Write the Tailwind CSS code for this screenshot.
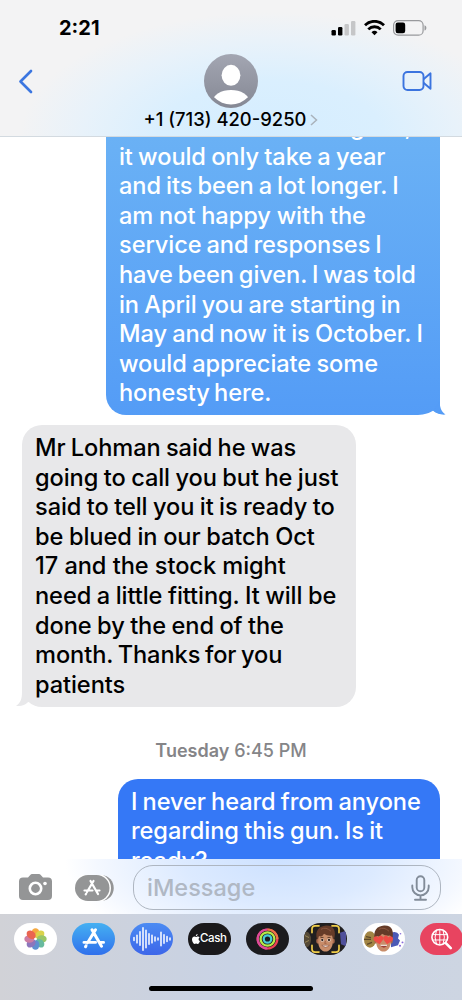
<!DOCTYPE html>
<html lang="en">
<head>
<meta charset="utf-8">
<title>Messages</title>
<script src="https://cdn.jsdelivr.net/npm/@tailwindcss/browser@4"></script>
</head>
<body class="bg-white">
<div class="flex h-[1000px] w-[462px] flex-col overflow-hidden bg-white font-['Inter','Liberation_Sans',sans-serif] text-black">

  <header class="h-[137px] shrink-0 border-b border-[#d3dae0] bg-[#f3f3f4] bg-[radial-gradient(ellipse_250px_125px_at_270px_137px,#d4edff_0%,#daeffe_45%,#e8f2fa_75%,#f3f3f400_100%)]">
    <div class="flex h-[54px] items-center justify-between pt-[2px] pr-[35px] pl-[59px]">
      <span class="text-[20px] font-bold">2:21</span>
      <div class="flex items-center gap-[8px]">
        <svg width="25" height="16" viewBox="0 0 25 16"><rect x="0.5" y="10" width="4.4" height="5.5" rx="1.2"/><rect x="7" y="7" width="4.4" height="8.500" rx="1.200"/><rect x="13.500" y="4" width="4.400" height="11.500" rx="1.200" fill="#c5c6c8"/><rect x="20" y="1" width="4.400" height="14.500" rx="1.200" fill="#c5c6c8"/></svg>
        <svg width="21" height="16" viewBox="0 0 21 16" fill="none" stroke="#000" stroke-width="2.800"><path d="M1 5.200a13.500 13.500 0 0 1 19 0"/><path d="M4.300 9.400a8.600 8.600 0 0 1 12.400 0"/><path d="M10.500 15.200l-3-3a4.300 4.300 0 0 1 6 0z" fill="#000" stroke="none"/></svg>
        <svg width="34" height="16" viewBox="0 0 34 16"><rect x=".6" y=".6" width="29.500" height="14.600" rx="4.500" fill="none" stroke="#98999c" stroke-width="1.200"/><rect x="2.600" y="2.600" width="9.600" height="10.600" rx="2.200"/><path d="M31.500 5.200c2.500.8 2.500 4.600 0 5.400z" fill="#98999c"/></svg>
      </div>
    </div>
    <div class="flex h-[54px] items-center justify-between pr-[29px] pl-[18px]">
      <svg width="16" height="25" viewBox="0 0 16 25" fill="none" stroke="#3b76e0" stroke-width="2.700" stroke-linecap="round" stroke-linejoin="round"><path d="M13 2L2.500 12.500 13 23"/></svg>
      <svg class="ml-[26px]" width="54" height="54" viewBox="0 0 54 54"><defs><linearGradient id="av" x2="0" y2="1"><stop stop-color="#a3a6b2"/><stop offset="1" stop-color="#858894"/></linearGradient><clipPath id="avc"><circle cx="27" cy="27" r="23.500"/></clipPath></defs><circle cx="27" cy="27" r="27" fill="url(#av)"/><ellipse cx="27" cy="21.300" rx="9.400" ry="10.500" fill="#fff"/><ellipse cx="27" cy="47" rx="18" ry="11" fill="#fff" clip-path="url(#avc)"/></svg>
      <svg width="31" height="22" viewBox="0 0 31 22" fill="none" stroke="#3b74df" stroke-width="1.900" stroke-linejoin="round"><rect x="1.500" y="2" width="20" height="18" rx="4"/><path d="M21.500 9.300l7-6v15.400l-7-6"/></svg>
    </div>
    <div class="flex h-[24px] items-center pl-[143.500px]">
      <span class="text-[18.400px] font-medium whitespace-nowrap">+1 (713) 420-9250</span>
      <svg class="ml-[4px]" width="8" height="12" viewBox="0 0 8 12" fill="none" stroke="#a9b2bb" stroke-width="1.500"><path d="M1 1l5.500 5L1 11"/></svg>
    </div>
  </header>

  <main class="flex h-[722px] shrink-0 flex-col overflow-hidden text-[23.600px] leading-[29.600px] font-[540] tracking-[-0.080px] whitespace-nowrap">
    <div class="relative mr-[22px] h-[278px] w-[334px] shrink-0 self-end rounded-bl-[20px] bg-linear-to-b from-[#6ab1f5] to-[#549cf6] text-white">
      <div class="h-full overflow-hidden rounded-bl-[20px] pl-[13px]">
        <p class="-mt-[25px] flex pl-[231px]"><span>g</span><span class="ml-[40px]">,</span></p>
        <p class="[word-spacing:-0.900px]">it would only take a year</p>
        <p class="[word-spacing:-1.100px]">and its been a lot longer. I</p>
        <p class="[word-spacing:-0.300px]">am not happy with the</p>
        <p class="[word-spacing:-1.200px]">service and responses I</p>
        <p class="[word-spacing:-1.300px]">have been given. I was told</p>
        <p class="[word-spacing:-0.900px]">in April you are starting in</p>
        <p class="[word-spacing:-0.900px]">May and now it is October. I</p>
        <p class="[word-spacing:-0.800px]">would appreciate some</p>
        <p class="[word-spacing:-1.900px]">honesty here.</p>
      </div>
      <svg class="absolute -right-[6px] -bottom-px" width="32" height="21" viewBox="0 0 32 21"><path d="M4 20C11 19.600 15.500 18 19 15.800 22 18 26 19.500 32 19.500V21H4z" fill="#fff"/><path d="M25.500 6c.3 6 1.500 10.500 6 13.600-5 .4-9-1-12-3.800z" fill="#549cf6"/></svg>
    </div>

    <div class="relative mt-[10px] ml-[22px] h-[282px] w-[334px] shrink-0 rounded-[20px] bg-[#e8e8ea] pt-[8px] pl-[13px]">
      <p class="[word-spacing:-0.900px]">Mr Lohman said he was</p>
      <p class="[word-spacing:-0.700px]">going to call you but he just</p>
      <p class="[word-spacing:-0.700px]">said to tell you it is ready to</p>
      <p class="[word-spacing:-0.500px]">be blued in our batch Oct</p>
      <p class="[word-spacing:0.100px]">17 and the stock might</p>
      <p class="[word-spacing:-0.600px]">need a little fitting. It will be</p>
      <p class="[word-spacing:-0.700px]">done by the end of the</p>
      <p class="[word-spacing:-1.600px]">month. Thanks for you</p>
      <p>patients</p>
      <svg class="absolute bottom-0 -left-[6px]" width="26" height="22" viewBox="0 0 26 22"><path d="M6 0v7c0 7-1.500 11-6 13.800 5 .8 9-.6 11.500-3.200L20 14z" fill="#e8e8ea"/></svg>
    </div>

    <p class="mt-[29px] text-center text-[18px] font-medium tracking-normal text-[#858588]"><span class="font-semibold">Tuesday</span> 6:45 PM</p>

    <div class="mt-[13px] mr-[22px] h-[120px] w-[322px] shrink-0 self-end rounded-t-[20px] bg-[#3578f6] pt-[8px] pl-[13px] text-white">
      <p class="[word-spacing:-1px]">I never heard from anyone</p>
      <p class="[word-spacing:-0.900px]">regarding this gun. Is it</p>
      <p>ready?</p>
    </div>
  </main>

  <section class="flex h-[55px] shrink-0 items-center bg-white bg-[radial-gradient(ellipse_215px_100px_at_280px_0px,#cde1ff_0%,#dceaff_45%,#f4f8ff_85%,#ffffff00_100%)] pt-[2px] pl-[19px]">
    <svg width="33" height="27" viewBox="0 0 33 27"><path d="M4 3.500h5L11.500.8Q12 0 13 0h7q1 0 1.500.8L24 3.500h5q4 0 4 4V22q0 4-4 4H4q-4 0-4-4V7.500q0-4 4-4z" fill="#949596"/><circle cx="16.500" cy="14.500" r="5.700" fill="none" stroke="#fff" stroke-width="2.600"/><circle cx="26" cy="9.500" r="1.800" fill="#fff"/></svg>
    <svg class="ml-[23px]" width="40" height="26" viewBox="0 0 40 26"><path d="M26 0c17 1 17 25 0 26z" fill="#949596"/><rect x="-1" y="-1.500" width="37" height="29" rx="14.500" fill="#fff"/><rect width="34.500" height="26" rx="13" fill="#949596"/><g stroke="#fff" stroke-width="2.200" stroke-linecap="round"><path d="M15.500 6l7.500 13M18.500 6L12 17M9.500 15.500h8M21.500 15.500h3M11.200 18.700l-.5.700"/></g></svg>
    <div class="ml-[18px] flex h-[45px] w-[308px] items-center justify-between rounded-[20px] border border-[#aeb6c1] pr-[10px] pl-[13px]">
      <span class="text-[23.500px] font-medium text-[#b0b8c4]">iMessage</span>
      <svg width="19" height="26" viewBox="0 0 19 26" fill="none" stroke="#828c99" stroke-width="1.900" stroke-linecap="round"><rect x="5.700" y="1.200" width="7.600" height="15" rx="3.800"/><path d="M1.300 10.500v1.700a8.200 8.200 0 0 0 16.400 0v-1.700M9.500 20.500v4M4 24.700h11"/></svg>
    </div>
  </section>

  <footer class="h-[86px] shrink-0 bg-linear-to-r from-[#d1d2d7] via-[#c8d2e4] to-[#cdd5e2]">
    <div class="flex gap-[15px] pt-[9px] pl-[14px]">
      <svg class="shrink-0" width="43" height="32" viewBox="0 0 43 33" preserveAspectRatio="none"><rect width="43" height="33" rx="16.500" fill="#fff"/><g opacity=".9"><ellipse cx="21.500" cy="10.300" rx="3.900" ry="5" fill="#f5a02c"/><ellipse cx="21.500" cy="10.300" rx="3.900" ry="5" fill="#d6cf38" transform="rotate(45 21.500 16.500)"/><ellipse cx="21.500" cy="10.300" rx="3.900" ry="5" fill="#8ec057" transform="rotate(90 21.500 16.500)"/><ellipse cx="21.500" cy="10.300" rx="3.900" ry="5" fill="#58b395" transform="rotate(135 21.500 16.500)"/><ellipse cx="21.500" cy="10.300" rx="3.900" ry="5" fill="#4d84cb" transform="rotate(180 21.500 16.500)"/><ellipse cx="21.500" cy="10.300" rx="3.900" ry="5" fill="#8068b5" transform="rotate(225 21.500 16.500)"/><ellipse cx="21.500" cy="10.300" rx="3.900" ry="5" fill="#c76f9b" transform="rotate(270 21.500 16.500)"/><ellipse cx="21.500" cy="10.300" rx="3.900" ry="5" fill="#e8553f" transform="rotate(315 21.500 16.500)"/></g><circle cx="21.500" cy="16.500" r="1.300" fill="#fff" opacity=".6"/></svg>
      <svg class="shrink-0" width="43" height="32" viewBox="0 0 43 33" preserveAspectRatio="none"><defs><linearGradient id="as" x2="0" y2="1"><stop stop-color="#45b0f2"/><stop offset="1" stop-color="#3070ec"/></linearGradient></defs><rect width="43" height="33" rx="16.500" fill="url(#as)"/><g stroke="#fff" stroke-width="3" stroke-linecap="round"><path d="M20 7l9.500 17M23.500 7l-8 13.500M12 20h11.500M28.500 20h3M14 23.500l-.5 1"/></g></svg>
      <svg class="shrink-0" width="43" height="32" viewBox="0 0 43 33" preserveAspectRatio="none"><defs><linearGradient id="wv" x2="0" y2="1"><stop stop-color="#4b8bf3"/><stop offset="1" stop-color="#3c66e9"/></linearGradient></defs><rect width="43" height="33" rx="16.500" fill="url(#wv)"/><path d="M4 15v3M7 12.500v8M10 9v14M13 5v23M16 7.500v18M19 11v11M22 12.500v8M25 14.500v4M28 15.500v2M31 9.500v14M34 12v9M37 14v5M40 15.500v2" stroke="#fff" stroke-width="1.500" stroke-linecap="round"/></svg>
      <div class="flex h-[32px] w-[43px] shrink-0 items-center rounded-full bg-[#1a191b] pl-[4px] text-white"><svg width="8" height="10" viewBox="0 0 8 10" fill="#fff"><path d="M5.600 0c.1 1.200-.8 2.200-1.800 2.300C3.700 1.200 4.500.2 5.600 0zM4 3c.5 0 1-.5 1.900-.5.700 0 1.400.4 1.700.9-1.500.9-1.300 3 .4 3.600C7.500 8.500 6.700 9.900 5.700 9.900 5.100 9.900 4.800 9.600 4.100 9.600S3 9.900 2.500 9.900C1.300 9.900 0 7.500 0 5.600 0 3.500 1.200 2.500 2.400 2.500 3.100 2.500 3.600 3 4 3z"/></svg><span class="text-[11.500px] font-medium tracking-[-0.400px]">Cash</span></div>
      <svg class="shrink-0" width="43" height="32" viewBox="0 0 43 33" preserveAspectRatio="none" fill="none" stroke-width="2.300"><rect width="43" height="33" rx="16.500" fill="#1b1b1e"/><circle cx="21.500" cy="16.500" r="9.800" stroke="#ec4055"/><path d="M21.500 26.300a9.800 9.800 0 0 1 0-19.600" stroke="#dd4b9b"/><path d="M21.500 6.700a9.800 9.800 0 0 1 9.800 9.800" stroke="#ec7547"/><circle cx="21.500" cy="16.500" r="6.900" stroke="#b6ea48"/><circle cx="21.500" cy="16.500" r="3.800" stroke="#49cbd6"/></svg>
      <svg class="shrink-0" width="43" height="32" viewBox="0 0 43 33" preserveAspectRatio="none"><defs><clipPath id="pill"><rect width="43" height="33" rx="16.500"/></clipPath><g id="face"><ellipse cx="14" cy="18.500" rx="1.800" ry="2.800" fill="#a9694b"/><ellipse cx="29" cy="18.500" rx="1.800" ry="2.800" fill="#a9694b"/><path d="M14.300 13q7.200-6 14.400 0v7c0 5-3.400 9.500-7.200 9.500S14.300 25 14.300 20z" fill="#c88d6a"/><path d="M13 17C10.500 8 15 3 22 2.500c8-.5 10.500 6 8 14.500l-2-4q-5 .5-8-2-2 4-5 2.500z" fill="#653b28"/><path d="M17 6.500q5-3 10 2" stroke="#8b5740" fill="none"/></g></defs><rect width="43" height="33" rx="16.500" fill="#211f20"/><g clip-path="url(#pill)"><ellipse cx="2.500" cy="17" rx="4.500" ry="8" fill="#554936"/><path d="M1 13l4 2M1 20l4-2" stroke="#988554"/><path d="M36 10l6-2v16l-5-2z" fill="#50509b"/><use href="#face"/><circle cx="18.300" cy="17.500" r="1.600" fill="#fff"/><circle cx="25" cy="17.500" r="1.600" fill="#fff"/><circle cx="18.300" cy="17.500" r="1.200" fill="#38261f"/><circle cx="25" cy="17.500" r="1.200" fill="#38261f"/><path d="M16.500 14.900h3M23.500 14.900h3" stroke="#5e3d2b"/><path d="M21.500 18.500l-.8 2.500h1.800" stroke="#985b40" fill="none" stroke-width=".8"/><path d="M17.800 23q3.800 3.700 7.600 0z" fill="#fff" stroke="#884c39" stroke-width=".6"/></g><path d="M8 10V6q0-3 3-3h4M28 3h4q3 0 3 3v4M35 23v4q0 3-3 3h-4M15 30h-4q-3 0-3-3v-4" fill="none" stroke="#efcd49" stroke-width="1.700" stroke-linecap="round"/></svg>
      <svg class="shrink-0" width="43" height="32" viewBox="0 0 43 33" preserveAspectRatio="none"><rect width="43" height="33" rx="16.500" fill="#fff"/><g clip-path="url(#pill)"><ellipse cx="8" cy="17" rx="6" ry="8.500" fill="#a28545"/><path d="M4 14l5 1M2 17h7M5 22l5-2" stroke="#5d4829" stroke-width="1.300"/><path d="M29 10q6-2 8 2l-1 4 2 2-2 5-7 2z" fill="#4b59b5"/><g fill="#896cdb"><circle cx="40.500" cy="20" r="1"/><circle cx="38.500" cy="11" r=".8"/><circle cx="38" cy="23.500" r="1.100"/></g><use href="#face"/><path d="M18 23q4 5 7.500 0z" fill="#9b4037"/><path d="M18.500 23h6.500" stroke="#fff"/><g fill="#ef4c46"><path d="M17.500 22l-5.500-4q-1.500-3 1-4.200 2-.7 3.200 1.200 1.300-2.800 3.600-1.700 2.500 1.400 1 4.200z"/><path d="M25 22l5.500-4q1.500-3-1-4.200-2-.7-3.200 1.200-1.300-2.800-3.600-1.700-2.500 1.400-1 4.200z"/></g></g></svg>
      <svg class="shrink-0" width="43" height="32" viewBox="0 0 43 33" preserveAspectRatio="none" fill="none" stroke="#fff"><rect width="43" height="33" rx="16.500" fill="#e84460" stroke="none"/><circle cx="19.800" cy="14.700" r="7.900" stroke-width="1.600"/><path d="M12 12h15.500M12 17.500h15.500M19.800 7v15.500M16.500 7.500q-2.800 7 0 14.500M23 7.500q2.800 7 0 14.500"/><path d="M25.800 20.800l5 5.200" stroke-width="2.600" stroke-linecap="round"/></svg>
    </div>
    <div class="mt-[31px] ml-[149px] h-[5px] w-[164px] rounded-full bg-black"></div>
  </footer>
</div>
</body>
</html>
